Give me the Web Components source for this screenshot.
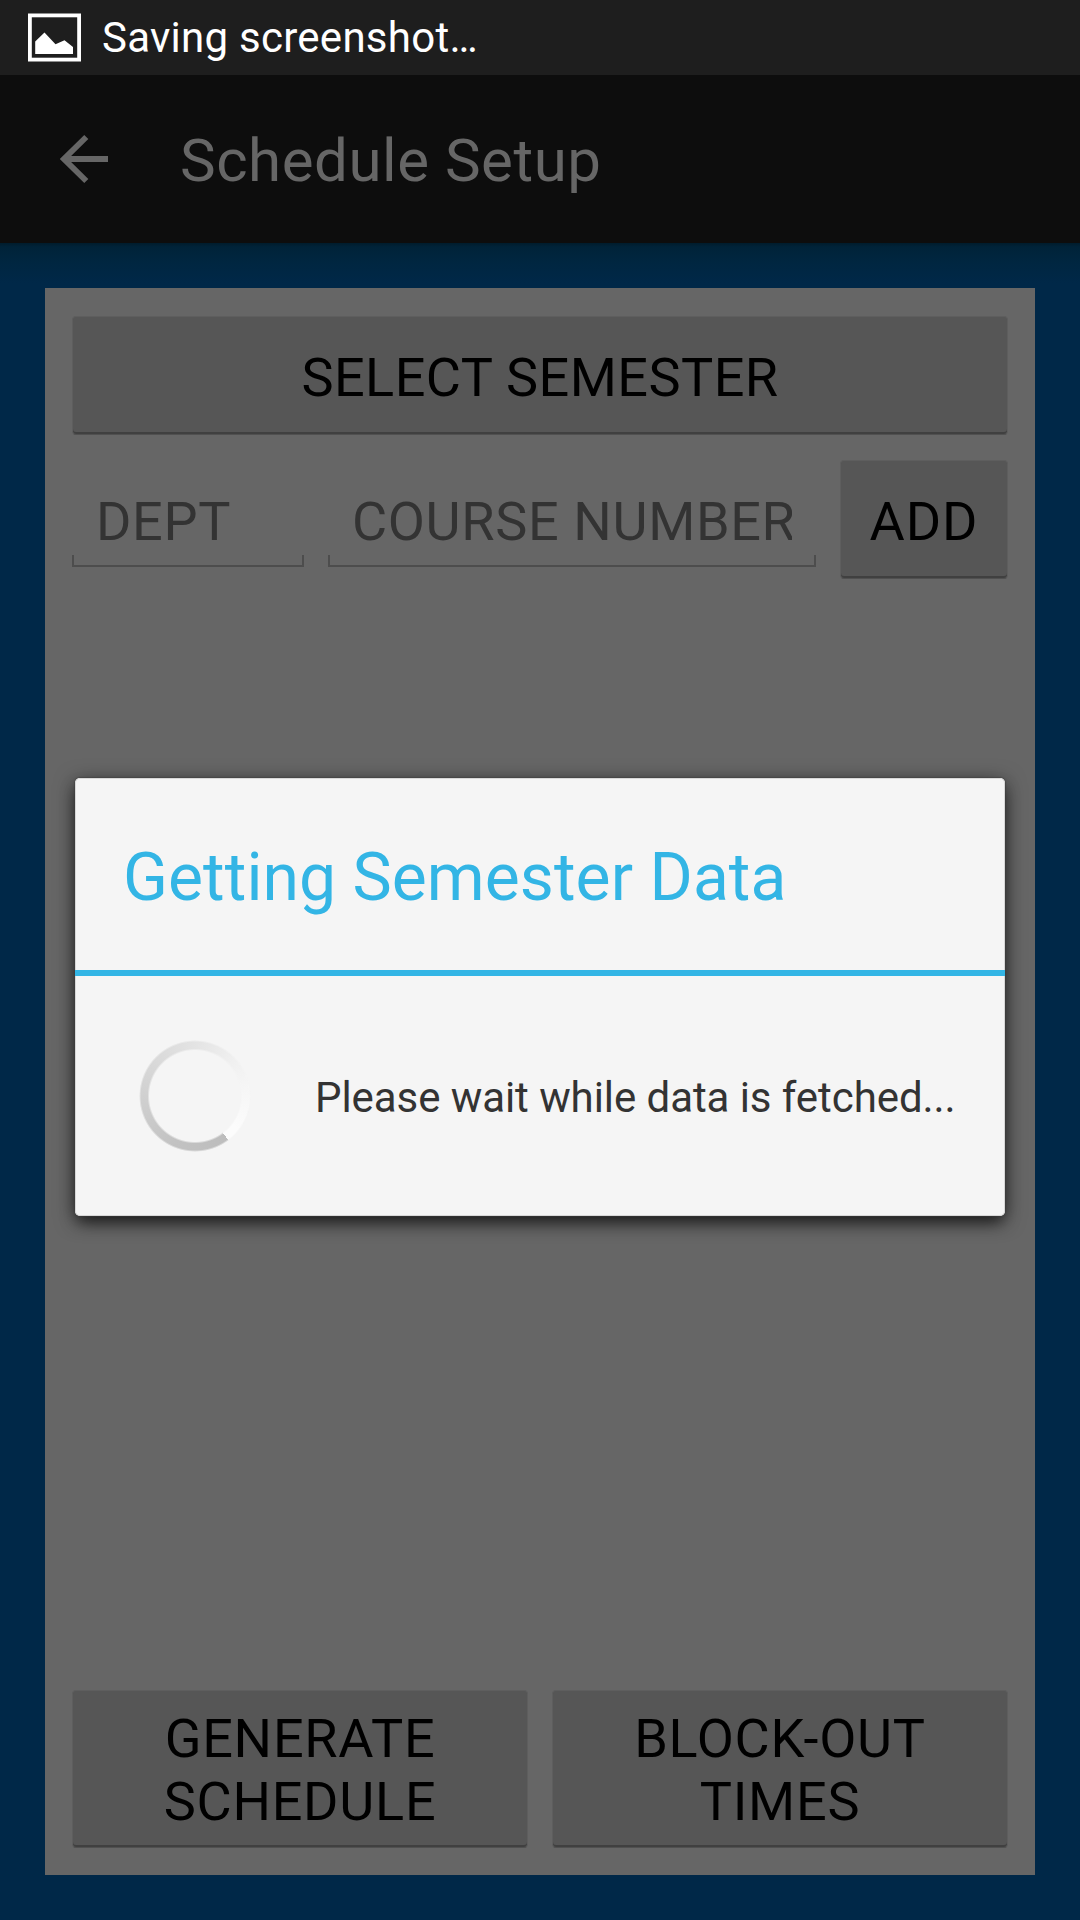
<!DOCTYPE html>
<html lang="en">
<head>
<meta charset="utf-8">
<title>Schedule Setup</title>
<style>
  html, body { margin: 0; height: 100%; overflow: hidden; }
  body { font-family: Roboto, "Noto Sans", sans-serif; background: #002848; }
</style>
</head>
<body>
<schedule-screen></schedule-screen>
<script>
const define = (name, html) => customElements.define(name, class extends HTMLElement {
  constructor() {
    super();
    this.attachShadow({ mode: 'open' }).innerHTML = html;
  }
});

define('status-bar', `
  <style>
    :host { display: flex; align-items: center; height: 75px; box-sizing: border-box; background: #1e1e1e; color: #fff; padding-left: 27px; }
    svg { display: block; margin-right: 21px; }
    .t { font-size: 42px; line-height: 50px; white-space: nowrap; letter-spacing: .26px; }
  </style>
  <svg width="54" height="50" viewBox="0 0 54 50">
    <rect x="2.9" y="2.4" width="49.2" height="44.2" fill="none" stroke="#fff" stroke-width="3.8"/>
    <path d="M8.2 41V28.5L17.5 19.6L28.5 31.2L37.5 27.3L46 34V41Z" fill="#fff"/>
  </svg>
  <span class="t"><slot></slot></span>`);

define('app-bar', `
  <style>
    :host { display: flex; align-items: center; height: 168px; box-sizing: border-box; background: #0d0d0d; color: #666; padding-left: 60px; }
    svg { display: block; margin-right: 72px; }
    .t { font-size: 60px; line-height: 70px; white-space: nowrap; letter-spacing: .54px; padding-top: 4px; }
  </style>
  <svg width="48" height="50" viewBox="0 0 48 50">
    <path d="M48 25H4M26.3 3L4 25L26.3 47" fill="none" stroke="#666" stroke-width="5.8"/>
  </svg>
  <span class="t"><slot></slot></span>`);

define('holo-button', `
  <style>
    :host { display: flex; align-items: center; justify-content: center; box-sizing: border-box; text-align: center;
      background: #565656; color: #000; border: 1px solid #5e5e5e; border-bottom-color: #505050; border-radius: 4px; font-size: 54px; line-height: 63px;
      box-shadow: inset 0 -2px 0 #404040; letter-spacing: var(--ls, .45px); }
    span { padding-top: var(--drop, 4px); }
  </style>
  <span><slot></slot></span>`);

define('holo-field', `
  <style>
    :host { display: flex; align-items: center; position: relative; box-sizing: border-box; height: 120px; padding: 2px 24px 0; color: #333; font-size: 54px; line-height: 63px; letter-spacing: .65px; }
    .t { flex: 1; min-width: 0; overflow: hidden; white-space: nowrap; }
    .line { position: absolute; left: 0; right: 0; bottom: 13px; height: 12px; box-sizing: border-box; border: 2px solid #4d4d4d; border-top: 0; }
  </style>
  <div class="t"><slot></slot></div><div class="line"></div>`);

define('progress-ring', `
  <style>
    :host { display: block; width: 112px; height: 112px; border-radius: 50%;
      background: conic-gradient(from 143deg, #bdbdbd 0deg, #c2c2c2 60deg, #d0d0d0 127deg, #e3e3e3 215deg, #f0f0f0 265deg, #f5f5f5 292deg, #fcfcfc 345deg, #fcfcfc 360deg);
      -webkit-mask: radial-gradient(circle, transparent 45.5px, #000 47.5px, #000 54px, transparent 56px);
      mask: radial-gradient(circle, transparent 45.5px, #000 47.5px, #000 54px, transparent 56px); }
  </style>`);

define('progress-dialog', `
  <style>
    :host { display: flex; flex-direction: column; box-sizing: border-box; width: 930px; height: 438px; background: #f5f5f5; border-radius: 5px;
      box-shadow: inset 0 0 0 1px #d8d8d8, 0 0 1px 1px rgba(60,60,60,.5), 0 4px 20px rgba(0,0,0,.55), 0 9px 16px -3px rgba(0,0,0,.5); }
    .head { height: 192px; box-sizing: border-box; padding: 6px 0 0 48px; display: flex; align-items: center; color: #33b5e5; font-size: 66px; line-height: 77px; white-space: nowrap; letter-spacing: .06px; }
    .rule { height: 6px; background: #33b5e5; }
    .body { flex: 1; display: flex; align-items: center; padding-left: 64px; }
    .msg { margin-left: 64px; padding-top: 2px; color: #333; font-size: 42px; line-height: 49px; white-space: nowrap; letter-spacing: -.07px; }
  </style>
  <div class="head"><span><slot name="title"></slot></span></div>
  <div class="rule"></div>
  <div class="body"><progress-ring></progress-ring><span class="msg"><slot></slot></span></div>`);

define('schedule-screen', `
  <style>
    :host { display: flex; flex-direction: column; position: relative; width: 1080px; height: 1920px; background: #002848; }
    main { flex: 1; display: flex; padding: 45px; background: linear-gradient(#001c2c 0, #002339 4px, #002640 18px, #002848 40px); }
    .card { flex: 1; min-width: 0; display: flex; flex-direction: column; box-sizing: border-box; background: #666; padding: 28px 27px 27px; }
    .wide { height: 119px; }
    .row { display: flex; gap: 24px; margin-top: 25px; }
    .row holo-button { flex: none; width: 168px; height: 119px; --ls: .9px; }
    .dept { flex: none; width: 232px; }
    .num { flex: 1; min-width: 0; }
    .bottom { display: flex; gap: 24px; margin-top: auto; }
    .bottom holo-button { flex: 1; height: 158px; --ls: .75px; --drop: 2px; }
    .layer { position: absolute; left: 75px; top: 778px; }
  </style>
  <status-bar>Saving screenshot…</status-bar>
  <app-bar>Schedule Setup</app-bar>
  <main><div class="card">
    <holo-button class="wide">SELECT SEMESTER</holo-button>
    <div class="row">
      <holo-field class="dept">DEPT</holo-field>
      <holo-field class="num">COURSE NUMBER</holo-field>
      <holo-button>ADD</holo-button>
    </div>
    <div class="bottom">
      <holo-button>GENERATE<br>SCHEDULE</holo-button>
      <holo-button>BLOCK-OUT<br>TIMES</holo-button>
    </div>
  </div></main>
  <progress-dialog class="layer"><span slot="title">Getting Semester Data</span>Please wait while data is fetched...</progress-dialog>`);
</script>
</body>
</html>
